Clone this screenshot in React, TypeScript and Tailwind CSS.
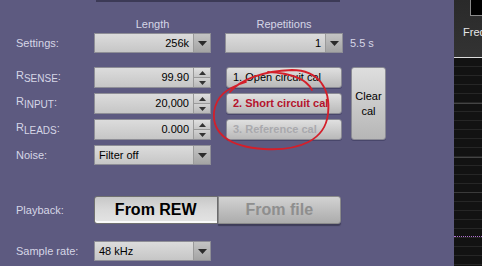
import React from 'react';

const font = { fontFamily: '"Liberation Sans", Arial, sans-serif' };

const DownArrow = () => (
  <svg width="9" height="5" viewBox="0 0 9 5"><path d="M0 0h9L4.5 5z" fill="#2b2b2b" /></svg>
);

const Dropdown = ({ value, align = 'right' }: { value: string; align?: 'left' | 'right' }) => (
  <div className="flex h-full w-full border border-[#8e8e96] bg-gradient-to-b from-[#dcdcdc] to-[#c6c6c6] text-[11px] text-black">
    <div className={`flex flex-1 items-center px-[4px] ${align === 'right' ? 'justify-end' : 'justify-start'}`}>{value}</div>
    <div className="flex w-[17px] items-center justify-center border-l border-[#9a9a9a] bg-gradient-to-b from-[#c4c4c4] to-[#a4a4a4]">
      <DownArrow />
    </div>
  </div>
);

const Spinner = ({ value }: { value: string }) => (
  <div className="flex h-full w-full border border-[#8e8e96] bg-gradient-to-b from-[#dcdcdc] to-[#c6c6c6] text-[11px] text-black">
    <div className="flex flex-1 items-center justify-end px-[4px]">{value}</div>
    <div className="flex w-[17px] flex-col border-l border-[#9a9a9a] bg-[#c8c8c8]">
      <div className="flex flex-1 items-center justify-center border-b border-[#9a9a9a] bg-gradient-to-b from-[#e0e0e0] to-[#c6c6c6]">
        <svg width="7" height="4" viewBox="0 0 7 4"><path d="M0 4h7L3.5 0z" fill="#333" /></svg>
      </div>
      <div className="flex flex-1 items-center justify-center bg-gradient-to-b from-[#d2d2d2] to-[#b8b8b8]">
        <svg width="7" height="4" viewBox="0 0 7 4"><path d="M0 0h7L3.5 4z" fill="#333" /></svg>
      </div>
    </div>
  </div>
);

const CalButton = ({ label, tone }: { label: string; tone: 'normal' | 'red' | 'off' }) => (
  <div
    className={`flex h-full w-full items-center rounded-[3px] border border-[#8a8a94] bg-gradient-to-b from-[#e0e0e0] to-[#b9b9b9] pl-[6px] text-[11px] shadow-[0_1px_0_#48466a] ${
      tone === 'red' ? 'font-bold text-[#b4132c]' : tone === 'off' ? 'font-bold text-[#a9a9ad]' : 'text-black'
    }`}
  >
    {label}
  </div>
);

const RLabel = ({ sub }: { sub: string }) => (
  <div className="flex items-start pl-[16px] text-[11px] text-[#d6d6e6]">
    <span>R</span>
    <span className="mt-[4px] text-[10px]">{sub}</span>
    <span className="mt-[1px]">:</span>
  </div>
);

export default function App() {
  return (
    <div className="relative flex h-[266px] w-[482px] overflow-hidden bg-[#5d5a80]" style={font}>
      <div className="flex w-[454px] flex-col">
        <div className="ml-[96px] h-[2px] w-[244px] bg-[#3c3a56]" />

        <div className="mt-[14px] grid h-[14px] grid-cols-[94px_117px_14px_118px] text-[11px] text-[#d6d6e6]">
          <div />
          <div className="text-center">Length</div>
          <div />
          <div className="text-center">Repetitions</div>
        </div>

        <div className="mt-[3px] grid h-[20px] grid-cols-[94px_117px_14px_118px_auto] items-center">
          <div className="pl-[16px] text-[11px] text-[#d6d6e6]">Settings:</div>
          <div className="h-[20px]"><Dropdown value="256k" /></div>
          <div />
          <div className="h-[20px]"><Dropdown value="1" /></div>
          <div className="pl-[7px] text-[11px] text-[#d6d6e6]">5.5 s</div>
        </div>

        <div className="mt-[14px] grid grid-cols-[94px_117px_15px_116px_9px_35px] grid-rows-[21px_21px_21px_20px] gap-y-[5px]">
          <RLabel sub="SENSE" />
          <Spinner value="99.90" />
          <div />
          <CalButton label="1. Open circuit cal" tone="normal" />
          <div />
          <div className="row-span-3 flex flex-col items-center justify-center rounded-[3px] border border-[#8a8a94] bg-gradient-to-b from-[#dedede] to-[#b6b6b6] text-[11px] leading-[15px] text-black shadow-[0_1px_0_#48466a]">
            <span>Clear</span>
            <span>cal</span>
          </div>

          <RLabel sub="INPUT" />
          <Spinner value="20,000" />
          <div />
          <CalButton label="2. Short circuit cal" tone="red" />
          <div />

          <RLabel sub="LEADS" />
          <Spinner value="0.000" />
          <div />
          <CalButton label="3. Reference cal" tone="off" />
          <div />

          <div className="flex items-center pl-[16px] text-[11px] text-[#d6d6e6]">Noise:</div>
          <Dropdown value="Filter off" align="left" />
        </div>

        <div className="mt-[31px] flex h-[28px] items-center">
          <div className="w-[94px] pl-[16px] text-[11px] text-[#d6d6e6]">Playback:</div>
          <div className="flex h-full w-[247px]">
            <div className="flex flex-1 items-center justify-center rounded-l-[3px] border border-[#707070] bg-gradient-to-b from-[#c8c8c8] via-[#dadada] to-[#e4e4e4] text-[16px] font-bold text-black shadow-[inset_0_-2px_0_#fafafa]">
              From REW
            </div>
            <div className="flex flex-1 items-center justify-center rounded-r-[3px] border border-[#8a8a8a] bg-gradient-to-b from-[#d2d2d2] to-[#acacac] text-[16px] font-bold text-[#8e8e8e] shadow-[0_2px_1px_#3e3c58]">
              From file
            </div>
          </div>
        </div>

        <div className="mt-[17px] flex h-[20px] items-center">
          <div className="w-[94px] pl-[16px] text-[11px] text-[#d6d6e6]">Sample rate:</div>
          <div className="h-[20px] w-[117px]"><Dropdown value="48 kHz" align="left" /></div>
        </div>
      </div>

      <div className="flex w-[28px] flex-col">
        <div className="flex h-[57px] flex-col bg-gradient-to-b from-[#2a2a2a] to-[#333333]">
          <div className="ml-[16px] h-[16px] w-[12px] border-b border-l border-[#8a8a8a] bg-black" />
          <div className="ml-[9px] mt-[8px] whitespace-nowrap text-[11px] text-[#e6e6e6]">Freq</div>
        </div>
        <div className="h-[1px] bg-[#dcdcdc]" />
        <div className="relative flex-1 bg-[#121212] bg-[repeating-linear-gradient(to_bottom,transparent_0px,transparent_8px,#262626_8px,#262626_9px)]">
          <div className="absolute left-0 right-0 top-[45px] h-[1px] bg-[#444444]" />
          <div className="absolute left-0 right-0 top-[99px] h-[1px] bg-[#444444]" />
          <div className="absolute left-0 right-0 top-[134px] h-[1px] bg-[#3a3a3a]" />
          <div className="absolute left-0 right-0 top-[178px] h-[1px] border-t border-dotted border-[#b070d0]" />
        </div>
      </div>

      <svg className="pointer-events-none absolute left-0 top-0" width="482" height="266" viewBox="0 0 482 266">
        <path
          d="M230 92 C240 80 262 71 292 70 C318 70 331 88 328 114 C325 140 300 151 264 149 C230 147 212 134 214 112 C216 97 226 88 246 82 M268 72 C290 73 306 78 312 90"
          fill="none"
          stroke="#d41f2a"
          strokeWidth="1.8"
          strokeLinecap="round"
        />
      </svg>
    </div>
  );
}
